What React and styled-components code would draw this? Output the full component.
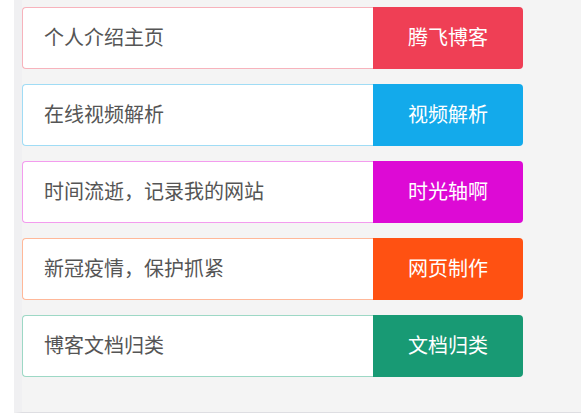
import React from 'react';
import styled, { createGlobalStyle } from 'styled-components';

const GlobalStyle = createGlobalStyle`
  html, body {
    margin: 0;
    padding: 0;
    background: #ffffff;
  }
  body {
    font-family: "Noto Sans CJK SC", "Microsoft YaHei", sans-serif;
  }
`;

const links = [
  { text: '个人介绍主页', label: '腾飞博客', color: '#ef3f55', border: '#f7b3bc' },
  { text: '在线视频解析', label: '视频解析', color: '#13aaeb', border: '#a0dcf5' },
  { text: '时间流逝，记录我的网站', label: '时光轴啊', color: '#dd0ad5', border: '#f39cee' },
  { text: '新冠疫情，保护抓紧', label: '网页制作', color: '#ff5112', border: '#ffb899' },
  { text: '博客文档归类', label: '文档归类', color: '#189a74', border: '#9dd8c5' },
];

const App = () => {
  return (
    <>
      <GlobalStyle />
      <Page>
        <Panel>
          {links.map((item) => (
            <LinkRow key={item.label}>
              <LinkText border={item.border}>{item.text}</LinkText>
              <LinkButton color={item.color}>{item.label}</LinkButton>
            </LinkRow>
          ))}
        </Panel>
      </Page>
    </>
  );
};

export default App;

const Page = styled.div`
  width: 100%;
  height: 414px;
  padding-left: 14px;
  box-sizing: border-box;
  background: #ffffff;
`;

const Panel = styled.div`
  height: 413px;
  box-sizing: border-box;
  padding-top: 7px;
  display: flex;
  flex-direction: column;
  gap: 15px;
  background: #f4f4f4;
  border-left: 8px solid #f0f0f2;
  border-bottom: 1px solid #dedee2;
`;

const LinkRow = styled.div`
  width: 501px;
  height: 62px;
  display: flex;
`;

const LinkText = styled.div`
  flex: 1;
  display: flex;
  align-items: center;
  padding: 0 0 2px 21px;
  background: #ffffff;
  border: 1px solid ${(p) => p.border};
  border-right: none;
  border-radius: 4px 0 0 4px;
  color: #555555;
  font-size: 20px;
  line-height: 1;
`;

const LinkButton = styled.div`
  width: 150px;
  display: flex;
  align-items: center;
  justify-content: center;
  padding-bottom: 2px;
  box-sizing: border-box;
  background: ${(p) => p.color};
  border-radius: 0 4px 4px 0;
  color: #ffffff;
  font-size: 20px;
  line-height: 1;
  cursor: pointer;
`;
